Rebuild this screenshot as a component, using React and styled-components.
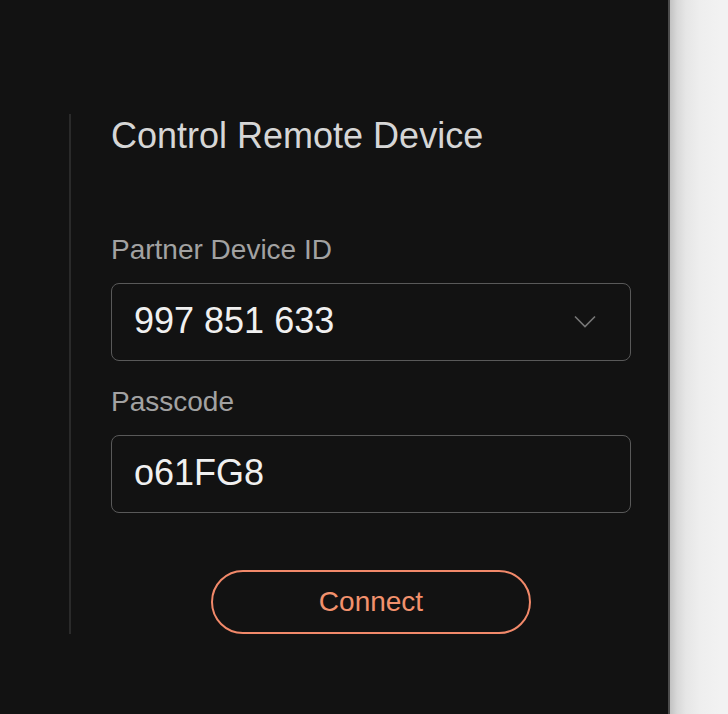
import React from 'react'
import styled, { createGlobalStyle } from 'styled-components'

const GlobalStyle = createGlobalStyle`
  html, body {
    margin: 0;
    padding: 0;
    background: #f2f2f2;
  }
  body {
    font-family: "Liberation Sans", Arial, Helvetica, sans-serif;
  }
`

const Page = styled.div`
  display: flex;
  width: 728px;
  height: 714px;
  overflow: hidden;
`
const Panel = styled.div`
  width: 670px;
  flex-shrink: 0;
  background: #121212;
  border-right: 2px solid #4c4c4c;
  padding: 114px 0 0 69px;
  box-sizing: border-box;
`
const Backdrop = styled.div`
  flex: 1;
  background: linear-gradient(to right, #c2c2c2 0px, #d8d8d8 7px, #e6e6e6 16px, #eeeeee 30px, #f2f2f2 50px);
`
const Section = styled.section`
  width: 561px;
  border-left: 2px solid #2a2a2a;
  padding-left: 40px;
  box-sizing: border-box;
  display: flex;
  flex-direction: column;
`
const Title = styled.h2`
  margin: 0;
  font-size: 36px;
  line-height: 43px;
  font-weight: 400;
  color: #d6d6d6;
`
const Field = styled.div`
  display: flex;
  flex-direction: column;
  gap: 16px;
  margin-top: ${p => p.$top}px;
`
const Label = styled.label`
  font-size: 28px;
  line-height: 34px;
  color: #a2a2a2;
`
const Box = styled.div`
  width: 520px;
  height: 78px;
  box-sizing: border-box;
  border: 1.5px solid #595959;
  border-radius: 8px;
  display: flex;
  align-items: center;
  justify-content: space-between;
  padding: 0 34px 2px 22px;
`
const Value = styled.span`
  font-size: 36px;
  color: #f0f0f0;
`
const Actions = styled.div`
  display: flex;
  justify-content: center;
  width: 520px;
  margin-top: 57px;
`
const ConnectButton = styled.button`
  width: 320px;
  height: 64px;
  border: 2px solid #f2896a;
  border-radius: 32px;
  background: transparent;
  color: #f2916d;
  font-family: inherit;
  font-size: 28px;
  padding: 0;
  cursor: pointer;
`

const Chevron = () => (
  <svg width="22" height="13" viewBox="0 0 22 13" fill="none">
    <path d="M1 1.5 L11 11.5 L21 1.5" stroke="#777" strokeWidth="1.6" />
  </svg>
)

const App = () => {
  return (
    <>
      <GlobalStyle />
      <Page>
        <Panel>
          <Section>
            <Title>Control Remote Device</Title>
            <Field $top={76}>
              <Label>Partner Device ID</Label>
              <Box>
                <Value>997 851 633</Value>
                <Chevron />
              </Box>
            </Field>
            <Field $top={24}>
              <Label>Passcode</Label>
              <Box>
                <Value>o61FG8</Value>
              </Box>
            </Field>
            <Actions>
              <ConnectButton>Connect</ConnectButton>
            </Actions>
          </Section>
        </Panel>
        <Backdrop />
      </Page>
    </>
  )
}
export default App
